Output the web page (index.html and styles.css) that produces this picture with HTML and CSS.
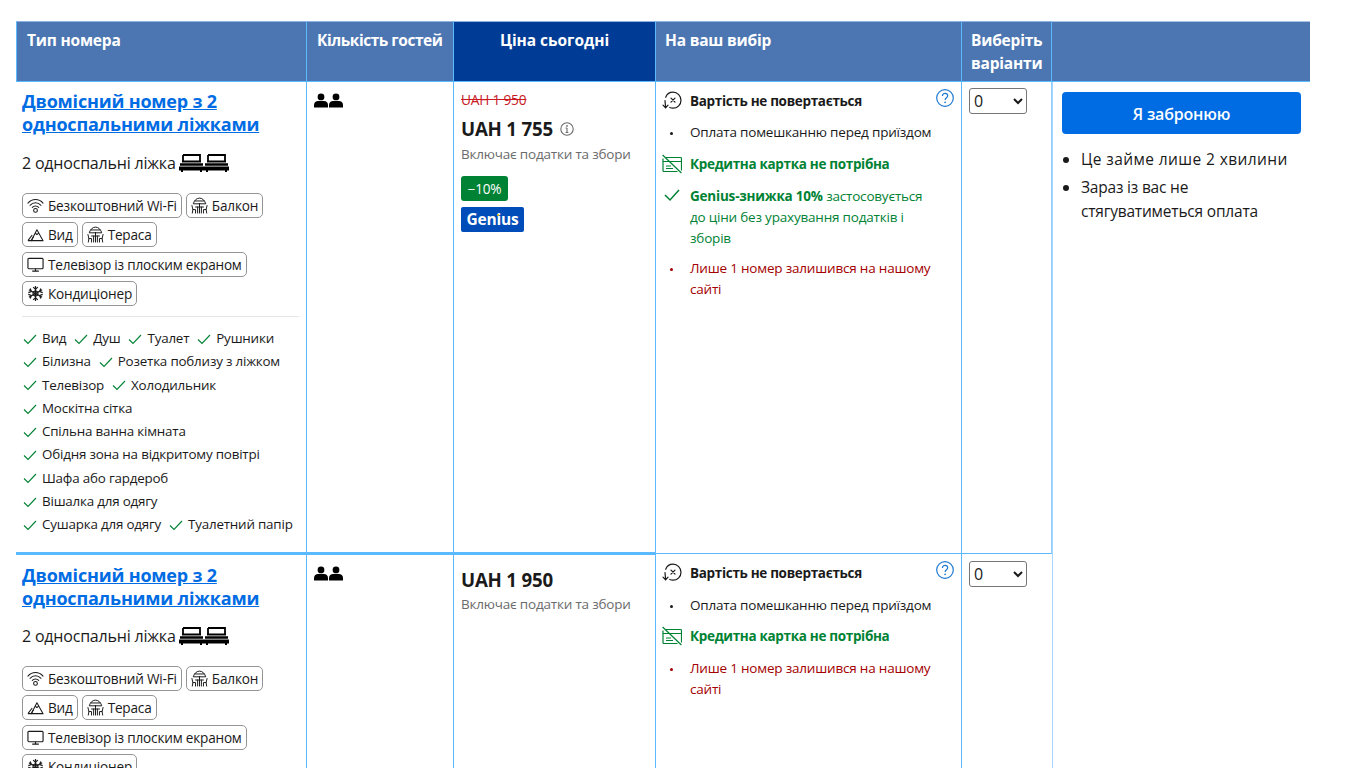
FILE: index.html
```html
<!DOCTYPE html>
<html lang="uk">
<head>
<meta charset="utf-8">
<title>Номери</title>
<link rel="stylesheet" href="styles.css">
</head>
<body>
<svg class="defs" aria-hidden="true">
  <symbol id="i-person" viewBox="0 0 14 14"><circle cx="7" cy="3.4" r="3.4"/><path d="M0 14V11.5C0 8.8 2 7.6 4 7.6H10C12 7.6 14 8.8 14 11.5V14Z"/></symbol>
  <symbol id="i-bed" viewBox="0 0 25 18"><path d="M4 1H21V8M4 1V8" fill="none" stroke="currentColor" stroke-width="1.8"/><path d="M3 6.6H22V8.4H3ZM1 9.2H24V11.8H1ZM0 12.6H25V16.4H23V18H21V16.4H4V18H2V16.4H0Z"/></symbol>
  <symbol id="i-wifi" viewBox="0 0 18 18"><g fill="none" stroke="currentColor" stroke-width="1.1" stroke-linecap="round"><path d="M1 6.5C5.5 1.5 12.5 1.5 17 6.5"/><path d="M3.2 8.8C6.5 5.2 11.5 5.2 14.8 8.8"/><path d="M5.6 11C7.5 9 10.5 9 12.4 11"/><circle cx="9" cy="14.2" r="2"/></g></symbol>
  <symbol id="i-balcony" viewBox="0 0 18 18"><g fill="none" stroke="currentColor" stroke-width="1.05" stroke-linecap="round"><path d="M2.5 6.8C3.5 3.5 6 1.2 9 1.2C12 1.2 14.5 3.5 15.5 6.8Z"/><path d="M4 4.2H14M9 6.8V17M4.8 10.6H13.2"/><path d="M1 9L2 13.3H4.8V17M2 13.3L1.4 17"/><path d="M17 9L16 13.3H13.2V17M16 13.3L16.6 17"/><path d="M7 10.6V17M11 10.6V17"/></g></symbol>
  <symbol id="i-view" viewBox="0 0 18 18"><g fill="none" stroke="currentColor" stroke-width="1.1" stroke-linejoin="round"><path d="M4.5 15.5H17L10.5 4Z"/><path d="M1 15.5L5.5 9.5M4.5 15.5L7 11M1 15.5H5M8.5 7.5L10.5 9L12.5 7.5"/></g></symbol>
  <symbol id="i-tv" viewBox="0 0 18 18"><g fill="none" stroke="currentColor" stroke-width="1.2"><rect x="1" y="2.5" width="16" height="11" rx="1"/><path d="M5.5 16H12.5M9 13.5V16"/></g></symbol>
  <symbol id="i-snow" viewBox="0 0 18 18"><g fill="none" stroke="currentColor" stroke-width="1.3"><path d="M9 1V17M2 5L16 13M16 5L2 13"/><path d="M6.5 2.2L9 4.5L11.5 2.2M6.5 15.8L9 13.5L11.5 15.8M1.4 8L4.4 7L3.5 3.7M16.6 8L13.6 7L14.5 3.7M1.4 10L4.4 11L3.5 14.3M16.6 10L13.6 11L14.5 14.3M6.5 7.5L9 6L11.5 7.5V10.5L9 12L6.5 10.5Z"/></g></symbol>
  <symbol id="i-check" viewBox="0 0 14 14"><path d="M1 7.5L5 11.5L13 3" fill="none" stroke="currentColor" stroke-width="1.1"/></symbol>
  <symbol id="i-check-b" viewBox="0 0 16 16"><path d="M1 8L6 13L15 3" fill="none" stroke="currentColor" stroke-width="1.5"/></symbol>
  <symbol id="i-nonref" viewBox="0 0 20 20"><g fill="none" stroke="currentColor" stroke-width="1.2" stroke-linecap="round"><path d="M3.7 6.2C5 3 7.8 1.2 11 1.2C15.5 1.2 19 4.8 19 9.2C19 13.6 15.5 17.2 11 17.2C9.8 17.2 8.8 17 7.8 16.5"/><path d="M3 9.5L3.6 16.5M1 14.2L3.6 16.8L6 14.2"/><path d="M9 7.2L13 11.2M13 7.2L9 11.2"/></g></symbol>
  <symbol id="i-card" viewBox="0 0 20 20"><g fill="none" stroke="currentColor" stroke-width="1.2"><path d="M3 3.5H18.5C19 3.5 19.5 4 19.5 4.5V16.5M15.5 17.5H2C1.2 17.5 1 17 1 16.5V4.5"/><path d="M1 7.5H19.5M4 12H9M4 14.5H11"/><path d="M0.6 1L19.4 19"/></g></symbol>
  <symbol id="i-help" viewBox="0 0 18 18"><circle cx="9" cy="9" r="8.3" fill="none" stroke="currentColor" stroke-width="1.2"/><path d="M6.4 7C6.4 5.4 7.5 4.4 9 4.4C10.5 4.4 11.7 5.4 11.7 6.8C11.7 8.7 9.1 8.8 9.1 11" fill="none" stroke="currentColor" stroke-width="1.2"/><circle cx="9.1" cy="13.3" r=".9"/></symbol>
  <symbol id="i-info" viewBox="0 0 14 14"><circle cx="7" cy="7" r="6.2" fill="none" stroke="currentColor" stroke-width="1.1"/><path d="M7 6V10.5M5.6 6H7M5.6 10.5H8.4" fill="none" stroke="currentColor" stroke-width="1.1"/><circle cx="7" cy="3.9" r=".9"/></symbol>
</svg>
<table class="rooms">
  <colgroup>
    <col class="c1"><col class="c2"><col class="c3"><col class="c4"><col class="c5"><col class="c6">
  </colgroup>
  <thead>
    <tr>
      <th class="first">Тип номера</th>
      <th class="tight">Кількість гостей</th>
      <th class="today">Ціна сьогодні</th>
      <th class="shift">На ваш вибір</th>
      <th class="shift">Виберіть варіанти</th>
      <th></th>
    </tr>
  </thead>
  <tbody>
    <tr class="row-one">
      <td class="room">
        <a class="title" href="#">Двомісний номер з 2 односпальними ліжками</a>
        <div class="beds">2 односпальні ліжка <svg class="bed"><use href="#i-bed"/></svg><svg class="bed"><use href="#i-bed"/></svg></div>
        <div class="pills">
          <span class="pill"><svg class="pi"><use href="#i-wifi"/></svg>Безкоштовний Wi-Fi</span>
          <span class="pill"><svg class="pi"><use href="#i-balcony"/></svg>Балкон</span>
          <span class="pill"><svg class="pi"><use href="#i-view"/></svg>Вид</span>
          <span class="pill"><svg class="pi"><use href="#i-balcony"/></svg>Тераса</span>
          <span class="pill"><svg class="pi"><use href="#i-tv"/></svg>Телевізор із плоским екраном</span>
          <span class="pill"><svg class="pi"><use href="#i-snow"/></svg>Кондиціонер</span>
        </div>
        <ul class="amen">
          <li><svg class="ck"><use href="#i-check"/></svg>Вид</li>
          <li><svg class="ck"><use href="#i-check"/></svg>Душ</li>
          <li><svg class="ck"><use href="#i-check"/></svg>Туалет</li>
          <li><svg class="ck"><use href="#i-check"/></svg>Рушники</li>
          <li><svg class="ck"><use href="#i-check"/></svg>Білизна</li>
          <li><svg class="ck"><use href="#i-check"/></svg>Розетка поблизу з ліжком</li>
          <li><svg class="ck"><use href="#i-check"/></svg>Телевізор</li>
          <li><svg class="ck"><use href="#i-check"/></svg>Холодильник</li>
          <li><svg class="ck"><use href="#i-check"/></svg>Москітна сітка</li>
          <li class="brk"><svg class="ck"><use href="#i-check"/></svg>Спільна ванна кімната</li>
          <li class="brk"><svg class="ck"><use href="#i-check"/></svg>Обідня зона на відкритому повітрі</li>
          <li class="brk"><svg class="ck"><use href="#i-check"/></svg>Шафа або гардероб</li>
          <li class="brk"><svg class="ck"><use href="#i-check"/></svg>Вішалка для одягу</li>
          <li><svg class="ck"><use href="#i-check"/></svg>Сушарка для одягу</li>
          <li><svg class="ck"><use href="#i-check"/></svg>Туалетний папір</li>
        </ul>
      </td>
      <td class="guests"><svg class="person"><use href="#i-person"/></svg><svg class="person"><use href="#i-person"/></svg></td>
      <td class="price">
        <div class="old">UAH 1 950</div>
        <div class="now">UAH 1 755 <svg class="info"><use href="#i-info"/></svg></div>
        <div class="taxes">Включає податки та збори</div>
        <div class="badge">−10%</div>
        <div class="genius">Gen<span class="gi">i</span>us</div>
      </td>
      <td class="cond">
        <svg class="help"><use href="#i-help"/></svg>
        <div class="c-row strong lead"><svg class="ci"><use href="#i-nonref"/></svg><span>Вартість не повертається</span></div>
        <div class="c-row"><span class="ci dot"></span><span>Оплата помешканню перед приїздом</span></div>
        <div class="c-row strong green"><svg class="ci"><use href="#i-card"/></svg><span>Кредитна картка не потрібна</span></div>
        <div class="c-row green2"><svg class="ci"><use href="#i-check-b"/></svg><span><b>Genius-знижка 10%</b> застосовується до ціни без урахування податків і зборів</span></div>
        <div class="c-row red"><span class="ci dot"></span><span>Лише 1 номер залишився на нашому сайті</span></div>
      </td>
      <td class="pick"><select aria-label="Кількість"><option>0</option><option>1</option></select></td>
      <td class="book" rowspan="2">
        <button class="cta" type="button">Я забронюю</button>
        <ul class="notes">
          <li class="wide">Це займе лише 2 хвилини</li>
          <li>Зараз із вас не стягуватиметься оплата</li>
        </ul>
      </td>
    </tr>
    <tr class="row-two">
      <td class="room">
        <a class="title" href="#">Двомісний номер з 2 односпальними ліжками</a>
        <div class="beds">2 односпальні ліжка <svg class="bed"><use href="#i-bed"/></svg><svg class="bed"><use href="#i-bed"/></svg></div>
        <div class="pills">
          <span class="pill"><svg class="pi"><use href="#i-wifi"/></svg>Безкоштовний Wi-Fi</span>
          <span class="pill"><svg class="pi"><use href="#i-balcony"/></svg>Балкон</span>
          <span class="pill"><svg class="pi"><use href="#i-view"/></svg>Вид</span>
          <span class="pill"><svg class="pi"><use href="#i-balcony"/></svg>Тераса</span>
          <span class="pill"><svg class="pi"><use href="#i-tv"/></svg>Телевізор із плоским екраном</span>
          <span class="pill"><svg class="pi"><use href="#i-snow"/></svg>Кондиціонер</span>
        </div>
      </td>
      <td class="guests"><svg class="person"><use href="#i-person"/></svg><svg class="person"><use href="#i-person"/></svg></td>
      <td class="price">
        <div class="now solo">UAH 1 950</div>
        <div class="taxes">Включає податки та збори</div>
      </td>
      <td class="cond">
        <svg class="help"><use href="#i-help"/></svg>
        <div class="c-row strong lead"><svg class="ci"><use href="#i-nonref"/></svg><span>Вартість не повертається</span></div>
        <div class="c-row close"><span class="ci dot"></span><span>Оплата помешканню перед приїздом</span></div>
        <div class="c-row strong green"><svg class="ci"><use href="#i-card"/></svg><span>Кредитна картка не потрібна</span></div>
        <div class="c-row red"><span class="ci dot"></span><span>Лише 1 номер залишився на нашому сайті</span></div>
      </td>
      <td class="pick"><select aria-label="Кількість"><option>0</option><option>1</option></select></td>
    </tr>
  </tbody>
</table>
</body>
</html>
```

FILE: styles.css
```css
html, body { height: 100%; overflow: hidden; }
body {
  margin: 0;
  padding: 21px 0 0 16px;
  box-sizing: border-box;
  background: #fff;
  color: #1a1a1a;
  font-family: "Open Sans", "Noto Sans", sans-serif;
  font-size: 15px;
  letter-spacing: -0.2px;
}
.defs { width: 0; height: 0; display: block; position: absolute; }
svg { fill: currentColor; }
.rooms { width: 1294px; table-layout: fixed; border-collapse: separate; border-spacing: 0; }
.c1 { width: 291px; } .c2 { width: 147px; } .c3 { width: 202px; }
.c4 { width: 306px; } .c5 { width: 90px; } .c6 { width: 258px; }

th {
  height: 61px;
  box-sizing: border-box;
  vertical-align: top;
  text-align: left;
  background: #4c76b2;
  color: #fff;
  font-size: 15.5px;
  font-weight: 700;
  line-height: 23px;
  padding: 7px 6px 0 10px;
  border-top: 1px solid #8fb3e0;
  border-bottom: 1px solid #5bbaff;
  border-right: 1px solid #5bbaff;
}
th.first { border-left: 1px solid #5bbaff; }
th.tight { letter-spacing: -0.47px; }
th.shift { padding-left: 9px; }
th:last-child { border-right: 0; border-top-color: #a9c3e6; }
th.today { background: #003b95; text-align: center; letter-spacing: -0.05px; padding-right: 10px; }

td { vertical-align: top; padding: 0; border-right: 1px solid #5bbaff; }
td:last-child { border-right: 0; }
.row-one td { height: 472px; box-sizing: border-box; }
.row-one .room, .row-one .guests, .row-one .price { border-bottom: 2px solid #5bbaff; }
.row-one .cond, .row-one .pick { border-bottom: 1px solid #5bbaff; }
.row-two .room, .row-two .guests, .row-two .price { border-top: 1px solid #5bbaff; }
.row-two .room, .row-two .guests, .row-two .price, .row-two .cond, .row-two .pick { height: 300px; }

.room { padding: 8px 7px 0 6px; }
.row-two .room { padding-top: 9px; }
.title { display: block; color: #006ce4; font-size: 18px; font-weight: 700; line-height: 23px; }
.beds { margin-top: 15px; font-size: 16px; line-height: 24px; display: flex; align-items: center; }
.row-two .beds { margin-top: 14px; }
.bed { width: 25px; height: 18px; color: #000; }
.beds .bed:first-of-type { margin-left: 3px; }
.pills { display: flex; flex-wrap: wrap; gap: 4.4px 4px; margin-top: 18px; }
.pill {
  display: inline-flex;
  align-items: center;
  height: 25px;
  box-sizing: border-box;
  padding: 0 4px 0 4px;
  border: 1px solid #949494;
  border-radius: 5px;
  font-size: 13.6px;
  white-space: nowrap;
}
.pi { width: 17px; height: 17px; margin-right: 4px; color: #1a1a1a; }
.amen {
  list-style: none;
  margin: 10px 0 0;
  padding: 10px 0 0;
  border-top: 1px solid #e7e7e7;
  display: flex;
  flex-wrap: wrap;
  column-gap: 7px;
  font-size: 13.4px;
  line-height: 23.25px;
}
.amen li { display: flex; align-items: center; white-space: nowrap; }
.amen li.brk { flex-basis: 100%; }
.ck { width: 14px; height: 14px; margin: 0 5px 0 1px; color: #008234; }

.guests { padding: 11px 7px 0 7px; line-height: 0; }
.person { width: 14px; height: 15px; margin-right: 1px; color: #000; }

.price { padding: 8px 7px 0 7px; }
.old { color: #c8191f; font-size: 13.7px; line-height: 20px; text-decoration: line-through; }
.now { margin-top: 6px; font-size: 18.7px; font-weight: 700; line-height: 26px; display: flex; align-items: center; }
.now.solo { margin-top: 4px; }
.info { width: 14px; height: 14px; margin-left: 7px; color: #6b6b6b; }
.taxes { margin-top: 2px; color: #6b6b6b; font-size: 13.5px; line-height: 20px; }
.row-two .taxes { margin-top: 1px; }
.badge {
  margin-top: 12px;
  width: 47px; height: 25px;
  background: #008234; color: #fff;
  border-radius: 3px;
  font-size: 13.6px; line-height: 25px; text-align: center;
}
.genius {
  margin-top: 6px;
  width: 63px; height: 25px;
  background: #004cb8; color: #fff;
  border-radius: 2px;
  font-size: 15.5px; font-weight: 700; line-height: 25px; text-align: center;
}
.gi { position: relative; }
.gi::after {
  content: "";
  position: absolute;
  left: 1px; top: 6px;
  width: 2px; height: 2px;
  background: #febb02;
  border-radius: 50%;
}

.cond { position: relative; padding: 9px 24px 0 6px; }
.help { position: absolute; top: 7px; right: 7px; width: 18px; height: 18px; color: #1f7ad1; }
.c-row { display: flex; font-size: 13.5px; line-height: 21px; margin-bottom: 11px; }
.c-row.lead { margin-bottom: 10px; }
.row-two .c-row.lead { margin-bottom: 11px; }
.row-two .c-row.close { margin-bottom: 10px; }
.ci { flex: none; width: 20px; height: 20px; margin-right: 8px; }
.c-row .dot { position: relative; }
.c-row .dot::before {
  content: "";
  position: absolute;
  left: 8px; top: 10px;
  width: 3px; height: 3px;
  border-radius: 50%;
  background: currentColor;
}
.strong { font-weight: 700; letter-spacing: -0.32px; }
.green { color: #008234; }
.green2 { color: #008234; margin-bottom: 9px; }
.green2 .ci { width: 16px; height: 16px; margin: 1px 10px 0 2px; }
.red { color: #a30000; }

.pick { padding: 6px 0 0 7px; border-right-color: #8fcdff; }
.row-two .pick { padding-top: 7px; }
select { display: block; width: 58px; height: 26px; font-size: 16px; font-family: "Open Sans", sans-serif; color: #1a1a1a; background: #fff; border: 1px solid #767676; border-radius: 3px; }

.book { padding: 10px 9px 0 9px; border-left: 1px solid #a8d8ff; }
.cta {
  display: block; width: 100%; height: 42px;
  padding-top: 2px;
  background: #006ce4; color: #fff;
  border: 0; border-radius: 4px;
  font-family: inherit; font-size: 16px; font-weight: 600;
  letter-spacing: -0.2px;
}
.notes { margin: 13px 0 0; padding: 0 0 0 19px; font-size: 15.5px; line-height: 24px; }
.notes li { margin-bottom: 4px; }
.notes .wide { letter-spacing: 0.4px; }
```
